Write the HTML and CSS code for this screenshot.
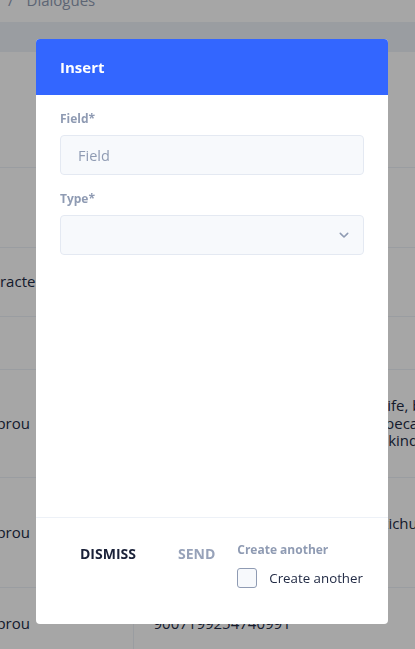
FILE: index.html
```html
<!DOCTYPE html>
<html lang="en">
<head>
<meta charset="utf-8">
<title>Dialogues</title>
<link rel="stylesheet" href="styles.css">
</head>
<body>
<div class="page">
  <nav class="crumbs"><span class="sep">/</span><span>Dialogues</span></nav>
  <table class="grid">
    <thead>
      <tr><th class="c1">Name</th><th class="c2">Description</th></tr>
    </thead>
    <tbody>
      <tr class="r1"><td class="c1"></td><td class="c2">Short note</td></tr>
      <tr class="r2"><td class="c1"></td><td class="c2">Another</td></tr>
      <tr class="r3"><td class="c1">Character</td><td class="c2">Main hero</td></tr>
      <tr class="r4"><td class="c1"></td><td class="c2">Unknown</td></tr>
      <tr class="r5"><td class="c1">He prou</td><td class="c2"><span class="ln">He spent the rest of his peaceful life, but</span><span class="ln">everybody truly cared about him because</span><span class="ln">and he never really learned to be kind</span></td></tr>
      <tr class="r6"><td class="c1">He prou</td><td class="c2"><span class="ln">She walked the long road with Pikichu</span><span class="ln">her small friend</span></td></tr>
      <tr class="r7"><td class="c1">He prou</td><td class="c2">9007199254740991</td></tr>
    </tbody>
  </table>
</div>

<div class="backdrop">
  <div class="dialog">
    <header class="dialog-head">Insert</header>
    <div class="dialog-body">
      <div class="group">
        <label class="lbl" for="field">Field*</label>
        <input class="control" id="field" type="text" placeholder="Field">
      </div>
      <div class="group">
        <label class="lbl">Type*</label>
        <div class="control select">
          <svg class="chev" width="10" height="7" viewBox="0 0 10 7" aria-hidden="true"><path d="M1.3 1.4 L5 5 L8.7 1.4" fill="none" stroke="#8f9bb3" stroke-width="1.6" stroke-linecap="round" stroke-linejoin="round"/></svg>
        </div>
      </div>
    </div>
    <footer class="dialog-foot">
      <button class="btn" type="button">DISMISS</button>
      <button class="btn btn-disabled" type="button">SEND</button>
      <div class="another">
        <span class="lbl">Create another</span>
        <label class="check"><span class="box"></span><span class="check-text">Create another</span></label>
      </div>
    </footer>
  </div>
</div>
</body>
</html>
```
FILE: styles.css
```css
html, body {
  margin: 0;
  padding: 0;
  overflow: hidden;
  background: #ffffff;
}
body {
  font-family: "Open Sans", "Noto Sans", sans-serif;
  color: #222b45;
  width: 415px;
  height: 649px;
}
.page {
  width: 415px;
}
.crumbs {
  margin-top: -11px;
  height: 33px;
  line-height: 22px;
  font-size: 15px;
  color: #8f9bb3;
  padding-left: 8px;
  white-space: nowrap;
}
.crumbs .sep {
  margin-right: 13px;
}
.grid {
  border-collapse: collapse;
  margin-left: -47px;
  width: 700px;
  table-layout: fixed;
  font-size: 15px;
  color: #222b45;
}
.grid th {
  height: 30px;
  padding: 0;
  background: #edf1f7;
  color: #edf1f7;
  font-size: 13px;
  text-align: left;
}
.grid td {
  padding: 0 20px;
  border-bottom: 1px solid #edf1f7;
  vertical-align: middle;
  white-space: nowrap;
  overflow: hidden;
  line-height: 17.5px;
}
.grid .c1 { width: 180px; }
.grid td.c2 { border-left: 1px solid #edf1f7; }
.grid .ln { display: block; }
.r1 td { height: 115px; }
.r2 td { height: 79px; }
.r3 td { height: 68px; }
.r4 td { height: 52px; }
.r5 td { height: 107px; }
.r6 td { height: 109px; }
.r7 td { height: 72px; }

.backdrop {
  position: fixed;
  inset: 0;
  background: rgba(0, 0, 0, 0.35);
  display: flex;
  padding: 39px 27px 25px 36px;
  box-sizing: border-box;
}
.dialog {
  flex: 1;
  display: flex;
  flex-direction: column;
  background: #ffffff;
  border-radius: 4px;
  overflow: hidden;
}
.dialog-head {
  background: #3366ff;
  color: #ffffff;
  font-size: 15px;
  font-weight: 700;
  line-height: 24px;
  padding: 16px 24px;
}
.dialog-body {
  flex: 1;
  padding: 16px 24px 0;
  display: flex;
  flex-direction: column;
  gap: 16px;
}
.group {
  display: flex;
  flex-direction: column;
}
.lbl {
  font-size: 12px;
  font-weight: 700;
  line-height: 16px;
  color: #8f9bb3;
  white-space: nowrap;
}
.group .lbl {
  margin-bottom: 8px;
}
.control {
  box-sizing: border-box;
  height: 40px;
  width: 100%;
  margin: 0;
  background: #f7f9fc;
  border: 1px solid #e4e9f2;
  border-radius: 4px;
  padding: 0 17px;
  font-family: inherit;
  font-size: 14.5px;
  color: #222b45;
  outline: none;
}
.control::placeholder {
  color: #8f9bb3;
  opacity: 1;
}
.select {
  display: flex;
  align-items: center;
  justify-content: flex-end;
  padding-right: 14px;
}
.chev {
  display: block;
}
.dialog-foot {
  border-top: 1px solid #edf1f7;
  padding: 24px 24px 36px;
  display: flex;
  align-items: flex-start;
  gap: 2px;
}
.btn {
  flex-shrink: 0;
  font-family: inherit;
  font-size: 14px;
  font-weight: 700;
  line-height: 16px;
  padding: 4px 20px;
  margin: 0;
  border: 0;
  background: transparent;
  color: #1a2138;
  cursor: pointer;
  white-space: nowrap;
}
.btn-disabled {
  color: #97a2b9;
  cursor: default;
}
.another {
  flex-shrink: 0;
  display: flex;
  flex-direction: column;
}
.check {
  margin-top: 10px;
  display: flex;
  align-items: center;
  gap: 12px;
}
.box {
  flex-shrink: 0;
  box-sizing: border-box;
  width: 20px;
  height: 20px;
  border: 1px solid #8f9bb3;
  border-radius: 3px;
  background: #f7f9fc;
}
.check-text {
  font-size: 13.3px;
  line-height: 20px;
  color: #222b45;
  white-space: nowrap;
}
```
